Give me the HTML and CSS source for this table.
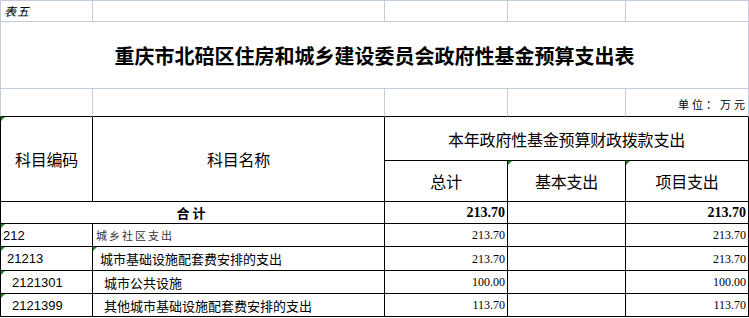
FILE: index.html
```html
<!DOCTYPE html>
<html lang="zh-CN">
<head>
<meta charset="utf-8">
<title>重庆市北碚区住房和城乡建设委员会政府性基金预算支出表</title>
<link rel="stylesheet" href="styles.css">
</head>
<body>
<table class="sheet">
  <colgroup>
    <col class="c1"><col class="c2"><col class="c3"><col class="c4"><col class="c5">
  </colgroup>
  <tr class="r-top">
    <td class="g first top label-five">表五</td>
    <td class="g top"></td>
    <td class="g top"></td>
    <td class="g top"></td>
    <td class="g top"></td>
  </tr>
  <tr class="r-title">
    <td class="g first title" colspan="5">重庆市北碚区住房和城乡建设委员会政府性基金预算支出表</td>
  </tr>
  <tr class="r-unit">
    <td class="g first dark-b"></td>
    <td class="g dark-b"></td>
    <td class="g dark-b"></td>
    <td class="g dark-b"></td>
    <td class="g dark-b unit">单位：万元</td>
  </tr>
  <tr class="r-h1">
    <td class="k first hd mark" rowspan="2">科目编码</td>
    <td class="k hd" rowspan="2">科目名称</td>
    <td class="k hd" colspan="3">本年政府性基金预算财政拨款支出</td>
  </tr>
  <tr class="r-h2">
    <td class="k hd">总计</td>
    <td class="k hd mark">基本支出</td>
    <td class="k hd mark">项目支出</td>
  </tr>
  <tr class="r-sum">
    <td class="k first total" colspan="2">合计</td>
    <td class="k num bold">213.70</td>
    <td class="k num bold"></td>
    <td class="k num bold">213.70</td>
  </tr>
  <tr class="r-d">
    <td class="k first code mark">212</td>
    <td class="k name lvl1">城乡社区支出</td>
    <td class="k num">213.70</td>
    <td class="k num"></td>
    <td class="k num">213.70</td>
  </tr>
  <tr class="r-d2">
    <td class="k first code i1 mark">21213</td>
    <td class="k name i1 mark">城市基础设施配套费安排的支出</td>
    <td class="k num">213.70</td>
    <td class="k num"></td>
    <td class="k num">213.70</td>
  </tr>
  <tr class="r-d">
    <td class="k first code i2 mark">2121301</td>
    <td class="k name i2">城市公共设施</td>
    <td class="k num">100.00</td>
    <td class="k num"></td>
    <td class="k num">100.00</td>
  </tr>
  <tr class="r-d">
    <td class="k first code i2 mark">2121399</td>
    <td class="k name i2">其他城市基础设施配套费安排的支出</td>
    <td class="k num">113.70</td>
    <td class="k num"></td>
    <td class="k num">113.70</td>
  </tr>
</table>
</body>
</html>
```
FILE: styles.css
```css
html, body {
  margin: 0;
  padding: 0;
  background: #ffffff;
}

.sheet {
  table-layout: fixed;
  border-collapse: separate;
  border-spacing: 0;
  width: 749px;
  font-family: "Noto Sans CJK SC", "Liberation Sans", sans-serif;
  color: #000;
}

.c1 { width: 93px; }
.c2 { width: 292px; }
.c3 { width: 123px; }
.c4 { width: 118px; }
.c5 { width: 123px; }

td {
  padding: 0;
  position: relative;
  box-sizing: border-box;
  overflow: visible;
  white-space: nowrap;
  line-height: 1;
}

/* light spreadsheet gridlines */
.g {
  border-right: 1px solid #c5cbdb;
  border-bottom: 1px solid #c5cbdb;
}
.g.first { border-left: 1px solid #c5cbdb; }
.g.top { border-top: 1px solid #c5cbdb; }
.g.dark-b { border-bottom-color: #000; }

/* black table borders */
.k {
  border-right: 1px solid #000;
  border-bottom: 1px solid #000;
}
.k.first { border-left: 1px solid #000; }

.r-top { height: 22px; }
.r-title { height: 67px; }
.r-unit { height: 28px; }
.r-h1 { height: 44px; }
.r-h2 { height: 41px; }
.r-sum { height: 22px; }
.r-d { height: 23px; }
.r-d2 { height: 24px; }

.label-five {
  font-size: 12px;
  font-style: italic;
  padding-left: 3px;
  vertical-align: middle;
  letter-spacing: 1px;
}

.title {
  text-align: center;
  vertical-align: middle;
  font-size: 20px;
  font-weight: 700;
  padding-top: 2px;
}

.unit {
  text-align: right;
  vertical-align: middle;
  font-size: 11px;
  letter-spacing: 3px;
  padding-right: 0;
  padding-top: 3px;
}

.hd {
  text-align: center;
  vertical-align: middle;
  font-size: 16px;
  letter-spacing: -0.2px;
}

.total {
  text-align: center;
  vertical-align: middle;
  font-size: 13px;
  font-weight: 700;
  letter-spacing: 3px;
}

.num {
  text-align: right;
  vertical-align: middle;
  font-family: "Liberation Serif", serif;
  font-size: 12px;
  padding-right: 2px;
}
.num.bold {
  font-weight: 700;
  font-size: 14px;
}

.code {
  font-family: "Liberation Sans", sans-serif;
  font-size: 13px;
  vertical-align: middle;
  padding-left: 2px;
}
.code.i1 { padding-left: 6px; }
.code.i2 { padding-left: 11px; }

.name {
  font-size: 13px;
  vertical-align: middle;
  padding-left: 3px;
}
.name.i1 { padding-left: 7px; }
.name.i2 { padding-left: 11px; }
.name.lvl1 {
  font-size: 11px;
  letter-spacing: 2px;
  color: #333;
}

/* green error indicator triangles */
.mark::before {
  content: "";
  position: absolute;
  top: 0;
  left: 0;
  width: 0;
  height: 0;
  border-top: 4px solid #1f8f1f;
  border-right: 4px solid transparent;
}
```
